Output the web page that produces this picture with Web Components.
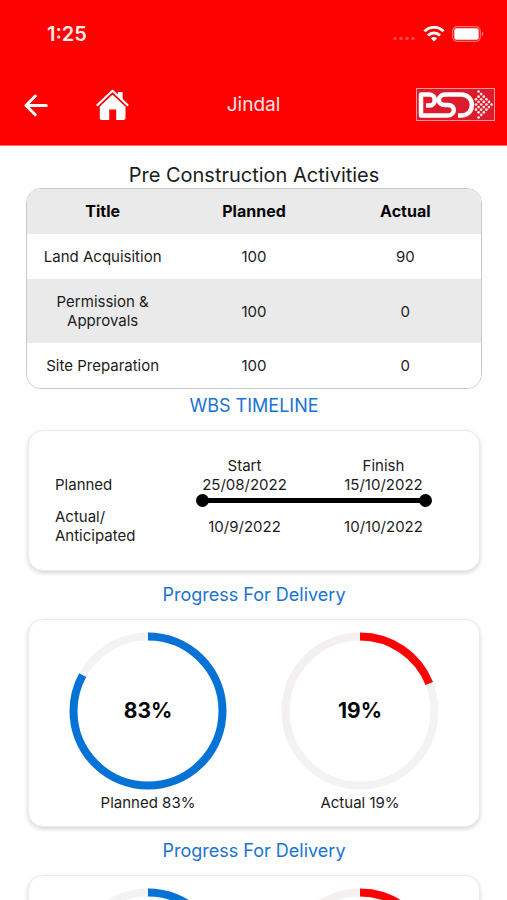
<!DOCTYPE html>
<html lang="en">
<head>
<meta charset="utf-8">
<meta name="viewport" content="width=device-width, initial-scale=1">
<title>Jindal</title>
<style>
  html { scrollbar-width: none; }
  body { margin: 0; background: #fefefe; color: #1c1c1c; font: 16px/19px Inter, "Liberation Sans", sans-serif; }
</style>
</head>
<body>
<project-screen></project-screen>

<script>
const define = (name, html, setup) => {
  const template = document.createElement('template');
  template.innerHTML = html;
  customElements.define(name, class extends HTMLElement {
    constructor() {
      super();
      this.attachShadow({ mode: 'open' }).append(template.content.cloneNode(true));
    }
    connectedCallback() { if (setup) setup(this, this.shadowRoot); }
  });
};

define('status-bar', `
<style>
  :host { display: flex; align-items: center; justify-content: space-between; height: 68px; padding: 0 23px 0 47px; color: #ffeaea; }
  time { font-size: 20px; font-weight: 600; line-height: 24px; }
  .signals { display: flex; align-items: center; gap: 7px; }
  svg { display: block; }
</style>
<time>1:25</time>
<div class="signals">
  <svg width="24" height="16" viewBox="0 0 24 16" fill="#ff4a4a" aria-label="No signal"><circle cx="3" cy="12.500" r="1.800"/><circle cx="9" cy="12.500" r="1.800"/><circle cx="15" cy="12.500" r="1.800"/><circle cx="21" cy="12.500" r="1.800"/></svg>
  <svg width="22" height="16" viewBox="0 0 22 16" fill="none" stroke="#fff" stroke-width="3" aria-label="Wi-Fi"><path d="M1.500 5.200a13.500 13.500 0 0 1 19 0M5 9.500a8.600 8.600 0 0 1 12 0"/><path d="M11 15.500L7.800 12.300a4.500 4.500 0 0 1 6.400 0z" fill="#fff" stroke="none"/></svg>
  <svg width="32" height="16" viewBox="0 0 32 16" aria-label="Battery full"><rect x=".7" y=".7" width="27.600" height="14.600" rx="4.200" fill="none" stroke="#ff7070" stroke-width="1.200"/><rect x="2.300" y="2.300" width="24.400" height="11.400" rx="2" fill="#fff"/><path d="M29.800 5.500c2 .8 2 4.200 0 5z" fill="#ff7070"/></svg>
</div>`);

define('psd-logo', `
<style>
  :host { display: block; }
  svg { display: block; }
</style>
<svg width="79" height="33" viewBox="0 0 79 33" role="img" aria-label="PSD">
  <rect x=".5" y=".5" width="78" height="32" fill="#dc1c2c" stroke="#ee9a9e"/>
  <g fill="none" stroke="#fff" stroke-width="4.500" stroke-linejoin="round">
    <path d="M10 17.500H13.500C20.500 17.500 20.500 6.500 13.500 6.500H5V27.500H31C40 27.500 40 17 32 17H29C20.500 17 21 6.500 29.500 6.500H45C59.500 6.500 59.500 27.500 45 27.500H42"/>
  </g>
  <g id="dots" fill="#ffe6e6"></g>
</svg>`, (host, root) => {
  const dots = root.getElementById('dots');
  if (dots.childElementCount) return;
  const ns = 'http://www.w3.org/2000/svg';
  for (let row = -5; row <= 5; row++) {
    for (let col = 0; col <= 6; col++) {
      const spread = Math.abs(row);
      if ((spread + col) % 2 || col + spread > 6 + (spread > 4 ? 1 : 0) || col < spread / 3 - 1) continue;
      const dot = document.createElementNS(ns, 'circle');
      dot.setAttribute('cx', 60 + col * 2.6);
      dot.setAttribute('cy', 16.5 + row * 2.6);
      dot.setAttribute('r', 1.35);
      dots.append(dot);
    }
  }
});

define('app-header', `
<style>
  :host { display: block; background: #fe0202; border-bottom: 1px solid #ff6a6a; color: #ffe6e6; }
  .bar { display: grid; grid-template-columns: 1fr auto 1fr; align-items: center; height: 73px; padding: 0 12px 4px 24px; }
  nav { display: flex; align-items: center; gap: 48px; }
  button { display: block; padding: 0; border: 0; background: none; color: #fff; }
  svg { display: block; }
  h1 { margin: 0 12px 0 0; font-size: 19px; font-weight: 400; line-height: 24px; }
  psd-logo { justify-self: end; }
</style>
<status-bar></status-bar>
<div class="bar">
  <nav>
    <button aria-label="Back"><svg width="24" height="24" viewBox="0 0 24 24" fill="none" stroke="#fff" stroke-width="3" stroke-linecap="round" stroke-linejoin="round"><path d="M22.300 12.500H2.500M11.300 3L2 12.500l9.300 9.300"/></svg></button>
    <button aria-label="Home"><svg width="33" height="32" viewBox="0 0 33 32" fill="#fff"><path d="M3.800 17L16.500 5 29.500 17V29q0 2-2 2H20.200V20.500H13.200V31H5.800q-2 0-2-2z"/><path d="M21.800 3h4.800v8.500l-4.800-4.400z"/><path d="M1.500 16L16.500 1.800 31.500 16" fill="none" stroke="#fff" stroke-width="2.200" stroke-linecap="round" stroke-linejoin="round"/><path d="M3.400 17.200L16.500 4.800 29.600 17.200" fill="none" stroke="#fe0202" stroke-width="1.100"/></svg></button>
  </nav>
  <h1><slot></slot></h1>
  <psd-logo></psd-logo>
</div>`);

define('activity-table', `
<style>
  :host { display: block; border: 1px solid #c8c8c8; border-radius: 15px; overflow: hidden; }
  table { width: 100%; border-collapse: collapse; table-layout: fixed; background: #fff; text-align: center; font-size: 15px; }
  th, td { padding: 13px 12px; vertical-align: middle; }
  th { font-weight: 700; color: #050505; }
  tbody th { font-weight: 400; color: inherit; }
  tr:nth-child(even), thead tr { background: #eaeaea; }
  thead { font-size: 16px; }
</style>
<table>
  <thead><tr><th scope="col">Title</th><th scope="col">Planned</th><th scope="col">Actual</th></tr></thead>
  <tbody>
    <tr><th scope="row">Land Acquisition</th><td>100</td><td>90</td></tr>
    <tr><th scope="row">Permission &amp; Approvals</th><td>100</td><td>0</td></tr>
    <tr><th scope="row">Site Preparation</th><td>100</td><td>0</td></tr>
  </tbody>
</table>`);

define('section-title', `
<style>
  :host { display: block; color: #1874d1; text-align: center; }
  h2 { margin: 0; font-size: 18px; font-weight: 400; line-height: 24px; }
</style>
<h2><slot></slot></h2>`);

define('info-card', `
<style>
  :host { display: block; border: 1px solid #ebebeb; border-radius: 15px; background: #fff; box-shadow: 0 2px 4px rgba(0, 0, 0, .16); }
</style>
<slot></slot>`);

define('wbs-timeline', `
<style>
  :host { display: grid; grid-template-columns: 120px 1fr 1fr; padding: 25px 26px; font-size: 15px; text-align: center; }
  .label { text-align: left; }
  .planned { align-self: end; }
  .actual { align-self: center; }
  .track { grid-column: 2 / 4; display: flex; align-items: center; margin: 0 21px; }
  .track i { width: 13px; height: 13px; border-radius: 50%; background: #000; }
  .track b { flex: 1; height: 5px; margin: 0 -2px; background: #000; }
</style>
<div class="label planned">Planned</div>
<div>Start<br>25/08/2022</div>
<div>Finish<br>15/10/2022</div>
<div class="track"><i></i><b></b><i></i></div>
<div class="label">Actual/<br>Anticipated</div>
<div class="actual">10/9/2022</div>
<div class="actual">10/10/2022</div>`);

define('progress-ring', `
<style>
  :host { display: grid; justify-items: center; row-gap: 3px; font-size: 15px; }
  .dial { display: grid; place-items: center; }
  .dial > * { grid-area: 1 / 1; }
  svg { display: block; }
  circle { fill: none; stroke-width: 8; }
  .rest { stroke: #f3f3f3; }
  .tail { stroke: var(--ring-tail, transparent); stroke-dasharray: 31 100; stroke-dashoffset: -69; }
  .done { stroke: var(--ring-color, #0573d6); }
  strong { font-size: 21px; font-weight: 700; line-height: 24px; color: #050505; }
</style>
<div class="dial">
  <svg width="158" height="158" viewBox="0 0 158 158" aria-hidden="true">
    <circle class="rest" cx="79" cy="79" r="74.500"/>
    <circle class="tail" cx="79" cy="79" r="74.500" pathLength="100" transform="rotate(-90 79 79)"/>
    <circle class="done" cx="79" cy="79" r="74.500" pathLength="100" transform="rotate(-90 79 79)"/>
  </svg>
  <strong></strong>
</div>
<div class="caption"></div>`, (host, root) => {
  const value = host.getAttribute('value');
  root.querySelector('.done').setAttribute('stroke-dasharray', value + ' 100');
  root.querySelector('strong').textContent = value + '%';
  root.querySelector('.caption').textContent = host.getAttribute('label') + ' ' + value + '%';
});

define('delivery-progress', `
<style>
  :host { display: grid; grid-template-columns: 1fr 1fr; padding: 12px 13px 14px; }
  .actual { --ring-color: #fe0202; --ring-tail: #f4f0f0; }
</style>
<progress-ring value="83" label="Planned"></progress-ring>
<progress-ring class="actual" value="19" label="Actual"></progress-ring>`);

define('project-screen', `
<style>
  :host { display: block; }
  main { padding: 17px 25px 24px 26px; }
  h2 { margin: 0; font-size: 20px; font-weight: 400; line-height: 25px; text-align: center; }
  section-title { padding: 12px 0; }
  section-title.first { padding: 5px 0 12px; }
  info-card { margin: 0 2px; }
</style>
<app-header>Jindal</app-header>
<main>
  <h2>Pre Construction Activities</h2>
  <activity-table></activity-table>
  <section-title class="first">WBS TIMELINE</section-title>
  <info-card><wbs-timeline></wbs-timeline></info-card>
  <section-title>Progress For Delivery</section-title>
  <info-card><delivery-progress></delivery-progress></info-card>
  <section-title>Progress For Delivery</section-title>
  <info-card><delivery-progress></delivery-progress></info-card>
</main>`);
</script>
</body>
</html>
